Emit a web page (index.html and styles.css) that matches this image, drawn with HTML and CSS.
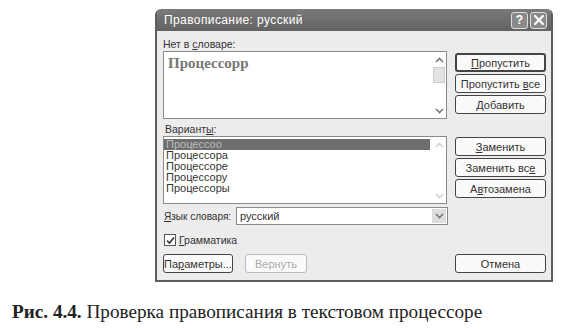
FILE: index.html
```html
<!DOCTYPE html>
<html lang="ru">
<head>
  <meta charset="UTF-8" />
  <title>Правописание: русский</title>
  <link rel="stylesheet" href="styles.css">
</head>
<body>
  <div class="dialog">
    <div class="titlebar">
      <span class="title">Правописание: русский</span>
      <span class="tb-buttons">
        <span class="tb-btn">?</span>
        <span class="tb-btn close">
          <svg width="12" height="12" viewBox="0 0 12 12"><path d="M2 2 L10 10 M10 2 L2 10" stroke="#fff" stroke-width="2.2" stroke-linecap="round"/></svg>
        </span>
      </span>
    </div>
    <div class="content">
      <div class="label lbl-top">Нет в <u>с</u>ловаре:</div>
      <div class="row">
        <div class="box notfound">
          <div class="word">Процессорр</div>
          <div class="scroll">
            <svg class="arrow" width="9" height="6" viewBox="0 0 9 6"><path d="M1 5 L4.5 1.5 L8 5" fill="none" stroke="#777" stroke-width="1.6"/></svg>
            <span class="thumb"></span>
            <svg class="arrow down" width="9" height="6" viewBox="0 0 9 6"><path d="M1 1 L4.5 4.5 L8 1" fill="none" stroke="#777" stroke-width="1.6"/></svg>
          </div>
        </div>
        <div class="buttons">
          <button class="btn focused"><u>П</u>ропустить</button>
          <button class="btn">Пропустить <u>в</u>се</button>
          <button class="btn"><u>Д</u>обавить</button>
        </div>
      </div>

      <div class="label lbl-var">Вариант<u>ы</u>:</div>
      <div class="row">
        <div class="box list">
          <div class="item selected">Процессоо</div>
          <div class="item">Процессора</div>
          <div class="item">Процессоре</div>
          <div class="item">Процессору</div>
          <div class="item">Процессоры</div>
          <div class="scroll faint">
            <svg class="arrow" width="9" height="6" viewBox="0 0 9 6"><path d="M1 5 L4.5 1.5 L8 5" fill="none" stroke="#ccc" stroke-width="1.4"/></svg>
            <svg class="arrow down" width="9" height="6" viewBox="0 0 9 6"><path d="M1 1 L4.5 4.5 L8 1" fill="none" stroke="#ccc" stroke-width="1.4"/></svg>
          </div>
        </div>
        <div class="buttons second">
          <button class="btn"><u>З</u>аменить</button>
          <button class="btn">Заменить вс<u>е</u></button>
          <button class="btn">А<u>в</u>тозамена</button>
        </div>
      </div>

      <div class="lang-row">
        <span class="label"><u>Я</u>зык словаря:</span>
        <div class="select">
          <span>русский</span>
          <span class="drop">
            <svg width="9" height="6" viewBox="0 0 9 6"><path d="M1 1 L4.5 4.5 L8 1" fill="none" stroke="#777" stroke-width="1.6"/></svg>
          </span>
        </div>
      </div>

      <div class="check-row">
        <span class="checkbox">
          <svg width="9" height="9" viewBox="0 0 9 9"><path d="M1 4.5 L3.5 7 L8 1.5" fill="none" stroke="#333" stroke-width="1.6"/></svg>
        </span>
        <span class="label"><u>Г</u>рамматика</span>
      </div>

      <div class="bottom-row">
        <button class="btn small">Па<u>р</u>аметры...</button>
        <button class="btn small disabled">Вернуть</button>
        <span class="spacer"></span>
        <button class="btn cancel">Отмена</button>
      </div>
    </div>
  </div>

  <p class="caption"><b>Рис. 4.4.</b> Проверка правописания в текстовом процессоре</p>
</body>
</html>
```

FILE: styles.css
```css
body {
  margin: 0;
  background: #fff;
  font-family: "Liberation Sans", sans-serif;
  color: #333;
}
.dialog {
  margin: 9px 0 0 155px;
  width: 394px;
  height: 271px;
  background: #ececec;
  border: 2px solid #5e5e5e;
  border-top: none;
  border-radius: 6px 6px 0 0;
  overflow: hidden;
}
.titlebar {
  height: 22px;
  background: linear-gradient(#7a7a7a, #626262);
  display: flex;
  align-items: center;
  justify-content: space-between;
  padding: 0 4px 0 7px;
}
.title {
  color: #fff;
  font-size: 12px;
  letter-spacing: 0.4px;
}
.tb-buttons {
  display: flex;
  gap: 2px;
}
.tb-btn {
  width: 15px;
  height: 15px;
  border: 1px solid #ddd;
  border-radius: 3px;
  background: #8a8a8a;
  color: #fff;
  font-size: 12px;
  font-weight: bold;
  display: flex;
  align-items: center;
  justify-content: center;
}
.content {
  padding: 0 5px 0 6px;
}
.label {
  font-size: 10.5px;
  color: #333;
  white-space: nowrap;
}
.lbl-top {
  margin-top: 7px;
  height: 12px;
  line-height: 12px;
}
.lbl-var {
  margin-top: 4px;
  height: 12px;
  line-height: 12px;
  margin-left: 2px;
}
.row {
  display: flex;
  gap: 8px;
  margin-top: 1px;
}
.box {
  position: relative;
  width: 282px;
  height: 66px;
  background: #fff;
  border: 1px solid #8a8a8a;
}
.word {
  font-family: "Liberation Serif", serif;
  font-weight: bold;
  font-size: 15px;
  color: #777;
  padding: 3px 0 0 4px;
}
.scroll {
  position: absolute;
  top: 1px;
  right: 1px;
  bottom: 1px;
  width: 12px;
  display: flex;
  flex-direction: column;
  align-items: center;
}
.scroll .arrow {
  margin-top: 4px;
}
.scroll .arrow.down {
  margin-top: auto;
  margin-bottom: 3px;
}
.scroll .thumb {
  width: 10px;
  height: 14px;
  margin-top: 4px;
  background: #e2e2e2;
  border: 1px solid #ccc;
}
.buttons {
  display: flex;
  flex-direction: column;
  gap: 2px;
  margin-top: 2px;
}
.buttons.second {
  margin-top: 1px;
}
.btn {
  width: 91px;
  height: 19px;
  padding: 0;
  background: #fafafa;
  border: 1px solid #444;
  border-radius: 3px;
  font-family: "Liberation Sans", sans-serif;
  font-size: 11px;
  color: #333;
}
.btn.focused {
  border-width: 2px;
}
.list .item {
  font-size: 11px;
  height: 11px;
  line-height: 11px;
  padding-left: 2px;
  width: 264px;
}
.list .item:first-child {
  margin-top: 2px;
}
.list .item.selected {
  background: #6e6e6e;
  color: #bbb;
}
.lang-row {
  display: flex;
  align-items: center;
  margin-top: 3px;
  height: 18px;
}
.lang-row .label {
  flex: none;
  width: 72px;
  padding-left: 1px;
  font-size: 10px;
}
.select {
  position: relative;
  width: 212px;
  height: 18px;
  box-sizing: border-box;
  background: #fff;
  border: 1px solid #8a8a8a;
  font-size: 11px;
  display: flex;
  align-items: center;
  padding-left: 3px;
}
.select .drop {
  position: absolute;
  right: 1px;
  top: 1px;
  width: 14px;
  height: 14px;
  background: #ddd;
  display: flex;
  align-items: center;
  justify-content: center;
}
.check-row {
  display: flex;
  align-items: center;
  gap: 3px;
  margin-top: 8px;
  height: 14px;
  padding-left: 1px;
}
.checkbox {
  width: 10px;
  height: 10px;
  background: #fff;
  border: 1px solid #555;
  display: flex;
  align-items: center;
  justify-content: center;
}
.bottom-row {
  display: flex;
  gap: 12px;
  margin-top: 7px;
}
.btn.small {
  width: 70px;
}
.btn.disabled {
  width: 62px;
  color: #aaa;
  border-color: #bbb;
}
.spacer {
  flex: 1;
}
.caption {
  margin: 19px 0 0 12px;
  font-family: "Liberation Serif", serif;
  font-size: 19.2px;
  color: #222;
}
```
